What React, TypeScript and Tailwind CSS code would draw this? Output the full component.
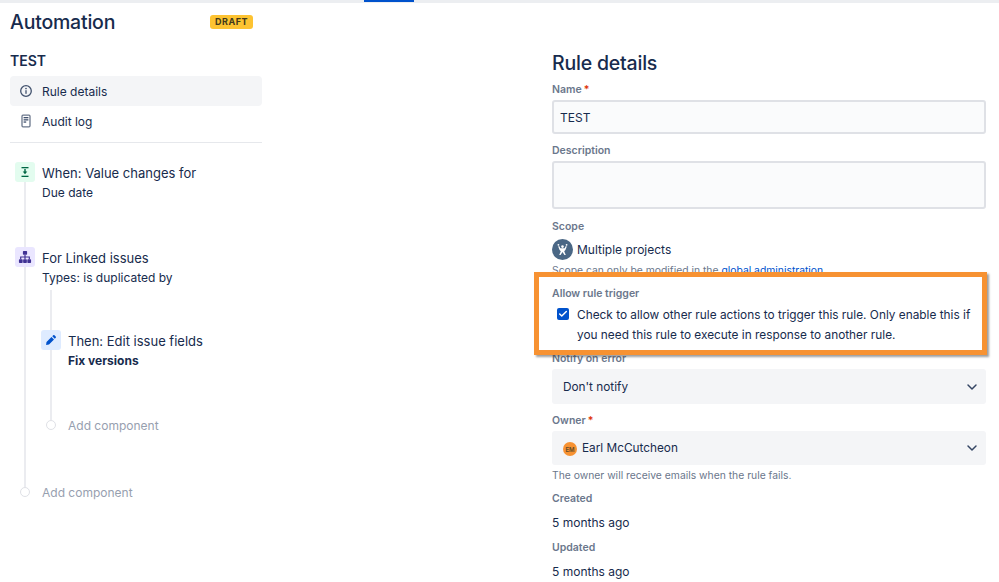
import { ChevronDown, Check } from 'lucide-react';
import type { ReactNode } from 'react';

function FieldLabel({ children, required }: { children: ReactNode; required?: boolean }) {
  return (
    <div className="h-[16px] pt-[2px] flex items-center text-[10.5px] leading-[14px] font-semibold text-[#6b778c]">
      {children}
      {required && <span className="ml-[2px] text-[#de350b]">*</span>}
    </div>
  );
}

function InfoIcon() {
  return (
    <svg width="14" height="14" viewBox="0 0 14 14" fill="none">
      <circle cx="7" cy="7" r="5.3" stroke="#42526e" strokeWidth="1.3" />
      <rect x="6.35" y="6.2" width="1.3" height="3.6" fill="#42526e" />
      <circle cx="7" cy="4.5" r="0.85" fill="#42526e" />
    </svg>
  );
}

function PageIcon() {
  return (
    <svg width="14" height="14" viewBox="0 0 14 14" fill="none">
      <rect x="3" y="1.2" width="8" height="11.6" rx="1" stroke="#6b778c" strokeWidth="1.3" />
      <rect x="4.6" y="3" width="4.8" height="1.3" fill="#42526e" />
      <rect x="4.6" y="5.2" width="4.8" height="1.3" fill="#42526e" />
      <rect x="4.6" y="7.4" width="2.6" height="1.3" fill="#42526e" />
    </svg>
  );
}

function StepText({ title, sub, boldSub }: { title: string; sub: string; boldSub?: boolean }) {
  return (
    <>
      <div className="text-[13px] leading-[22px]">{title}</div>
      <div className={`mt-[1px] text-[12px] leading-[16px] ${boldSub ? 'font-bold' : ''}`}>{sub}</div>
    </>
  );
}

function StepIcon({ tint, children }: { tint: string; children: ReactNode }) {
  return <div className={`w-[20px] h-[20px] shrink-0 rounded-[3px] flex items-center justify-center ${tint}`}>{children}</div>;
}

function AddComponent() {
  return (
    <div className="flex items-center h-[10px]">
      <div className="w-[20px] flex justify-center">
        <div className="w-[10px] h-[10px] rounded-full border border-[#dfe1e6] bg-white" />
      </div>
      <span className="ml-[7px] mt-[1px] text-[12px] text-[#97a0af]">Add component</span>
    </div>
  );
}

function SelectBox({ h, children }: { h: string; children: ReactNode }) {
  return (
    <div className={`mt-[3px] ${h} rounded-[3px] bg-[#f4f5f7] flex items-center justify-between pl-[11px] pr-[6px] text-[11.8px]`}>
      <div className="flex items-center pt-[2px]">{children}</div>
      <ChevronDown size={16} strokeWidth={2.2} color="#344563" />
    </div>
  );
}

export default function App() {
  return (
    <div className="w-[999px] h-[582px] overflow-hidden bg-white font-['Inter','Liberation_Sans',sans-serif] text-[#172b4d]">
      {/* top rule with active tab marker */}
      <div className="h-[3px] bg-[#eceef1] pl-[364px]">
        <div className="w-[50px] h-[2px] bg-[#0052cc]" />
      </div>

      <div className="flex">
        {/* Left: rule outline */}
        <aside className="w-[252px] ml-[10px] shrink-0">
          <div className="flex items-center justify-between h-[36px] pt-[1px]">
            <h1 className="text-[19.5px] font-medium leading-[36px] tracking-[-0.2px]">Automation</h1>
            <span className="mr-[9px] h-[14px] px-[5px] rounded-[3px] bg-[#fdc331] text-[9px] leading-[14px] font-bold tracking-[0.5px] text-[#42391a]">
              DRAFT
            </span>
          </div>
          <div className="mt-[13px] h-[18px] text-[14px] leading-[18px] font-semibold">TEST</div>
          <nav className="mt-[6px] text-[12px]">
            <div className="h-[30px] rounded-[4px] bg-[#f4f5f7] flex items-center pl-[9px]">
              <InfoIcon />
              <span className="ml-[9px] mt-[1px]">Rule details</span>
            </div>
            <div className="h-[30px] flex items-center pl-[9px]">
              <PageIcon />
              <span className="ml-[9px] mt-[1px]">Audit log</span>
            </div>
          </nav>
          <div className="mt-[6px] h-[1px] bg-[#e6e8ec]" />

          <div className="mt-[19px] ml-[5px]">
            {/* When */}
            <div className="flex">
              <div className="w-[20px] flex flex-col items-center">
                <StepIcon tint="bg-[#e3fcef]">
                  <svg width="12" height="12" viewBox="0 0 12 12" fill="#006644">
                    <rect x="2.5" y="1" width="7" height="1.3" />
                    <rect x="2.5" y="9.7" width="7" height="1.3" />
                    <path d="M5.3 3h1.4v2.6h1.6L6 8.3 3.7 5.6h1.6z" />
                  </svg>
                </StepIcon>
                <div className="w-[2px] h-[65px] bg-[#ebecf0]" />
              </div>
              <div className="ml-[7px]">
                <StepText title="When: Value changes for" sub="Due date" />
              </div>
            </div>

            {/* For linked issues, with its nested branch */}
            <div className="flex">
              <div className="w-[20px] flex flex-col items-center">
                <StepIcon tint="bg-[#eae6ff]">
                  <svg width="14" height="14" viewBox="0 0 12 12" fill="#403294">
                    <rect x="4.2" y="0.8" width="3.6" height="3.2" rx="0.6" />
                    <rect x="0.8" y="8" width="3.2" height="3.2" rx="0.6" />
                    <rect x="4.4" y="8" width="3.2" height="3.2" rx="0.6" />
                    <rect x="8" y="8" width="3.2" height="3.2" rx="0.6" />
                    <path d="M5.5 4h1v1.5h3.7V8h-1V6.5H6.5V8h-1V6.5H2.8V8h-1V5.5h3.7z" />
                  </svg>
                </StepIcon>
                <div className="w-[2px] flex-1 bg-[#ebecf0]" />
              </div>
              <div className="ml-[7px] pb-[57px]">
                <StepText title="For Linked issues" sub="Types: is duplicated by" />
                <div className="mt-[4px] -ml-[1px]">
                  <div className="w-[20px] flex justify-center">
                    <div className="w-[2px] h-[40px] bg-[#ebecf0]" />
                  </div>
                  <div className="flex">
                    <div className="w-[20px] flex flex-col items-center">
                      <StepIcon tint="bg-[#deebff]">
                        <svg width="12" height="12" viewBox="0 0 12 12" fill="#0052cc">
                          <path d="M8.2 1.3a.9.9 0 0 1 1.3 0l1.2 1.2a.9.9 0 0 1 0 1.3l-.9.9-2.5-2.5zM6.500 3 9 5.500 4 10.500l-2.900.5.4-3z" />
                        </svg>
                      </StepIcon>
                      <div className="w-[2px] h-[70px] bg-[#ebecf0]" />
                    </div>
                    <div className="ml-[7px]">
                      <StepText title="Then: Edit issue fields" sub="Fix versions" boldSub />
                    </div>
                  </div>
                  <AddComponent />
                </div>
              </div>
            </div>
            <AddComponent />
          </div>
        </aside>

        {/* Right: rule details form */}
        <main className="ml-[290px] w-[434px] shrink-0">
          <h2 className="mt-[46px] h-[28px] text-[19.5px] leading-[28px] font-medium tracking-[-0.2px]">Rule details</h2>
          <div className="mt-[4px]">
            <FieldLabel required>Name</FieldLabel>
          </div>
          <div className="mt-[3px] h-[34px] rounded-[3px] border-2 border-[#dfe1e6] bg-[#fafbfc] flex items-center pl-[6px] pt-[1px] text-[12px]">
            TEST
          </div>
          <div className="mt-[8px]">
            <FieldLabel>Description</FieldLabel>
          </div>
          <div className="mt-[3px] h-[48px] rounded-[3px] border-2 border-[#dfe1e6] bg-[#fafbfc]" />
          <div className="mt-[9px]">
            <FieldLabel>Scope</FieldLabel>
          </div>
          <div className="mt-[5px] h-[21px] flex items-center text-[12px]">
            <div className="w-[21px] h-[21px] rounded-full bg-[#4a6785] flex items-center justify-center">
              <svg width="13" height="13" viewBox="0 0 13 13" fill="#fff">
                <circle cx="6.5" cy="3.6" r="1.3" />
                <circle cx="2.4" cy="1.8" r="0.9" />
                <circle cx="10.6" cy="1.8" r="0.9" />
                <path d="M2.200 3.400l1-.3 1.200 2.200h4.200l1.200-2.200 1 .3-1.400 3.500-1.200 1.400 1.600 3.700h-1.400L6.500 9 4.600 12H3.200l1.600-3.700L3.600 6.900z" />
              </svg>
            </div>
            <span className="ml-[4px]">Multiple projects</span>
          </div>
          <div className="mt-[2px] h-[16px] text-[10.35px] leading-[16px] text-[#6b778c]">
            Scope can only be modified in the <span className="text-[#0052cc]">global administration</span>
          </div>

          {/* Callout drawn over the form */}
          <div className="relative z-10 -mt-[6px] -ml-[18px] -mr-[1px] border-[5px] border-[#f79232] bg-white pl-[13px] pt-[8px] pb-[6px] shadow-[2px_2px_2px_rgba(60,60,60,0.5)]">
            <FieldLabel>Allow rule trigger</FieldLabel>
            <div className="mt-[3px] flex">
              <div className="ml-[5px] mt-[4px] w-[12px] h-[12px] shrink-0 rounded-[2px] bg-[#0052cc] flex items-center justify-center">
                <Check size={10} strokeWidth={3.5} color="#fff" />
              </div>
              <p className="ml-[8px] pt-[1px] -mb-[1px] text-[11.85px] leading-[20px]">
                Check to allow other rule actions to trigger this rule. Only enable this if you need this rule to execute in response to another rule.
              </p>
            </div>
          </div>

          <div className="-mt-[5px]">
            <FieldLabel>Notify on error</FieldLabel>
          </div>
          <SelectBox h="h-[35px]">Don't notify</SelectBox>
          <div className="mt-[8px]">
            <FieldLabel required>Owner</FieldLabel>
          </div>
          <SelectBox h="h-[34px]">
            <span className="w-[14px] h-[14px] rounded-full bg-[#f79232] flex items-center justify-center text-[6px] font-semibold text-[#5e4b2a]">EM</span>
            <span className="ml-[5px]">Earl McCutcheon</span>
          </SelectBox>
          <div className="mt-[2px] h-[16px] text-[10.35px] leading-[16px] text-[#6b778c]">The owner will receive emails when the rule fails.</div>
          <div className="mt-[7px]">
            <FieldLabel>Created</FieldLabel>
          </div>
          <div className="mt-[7px] h-[20px] text-[12px] leading-[20px]">5 months ago</div>
          <div className="mt-[6px]">
            <FieldLabel>Updated</FieldLabel>
          </div>
          <div className="mt-[7px] h-[20px] text-[12px] leading-[20px]">5 months ago</div>
        </main>
      </div>
    </div>
  );
}
